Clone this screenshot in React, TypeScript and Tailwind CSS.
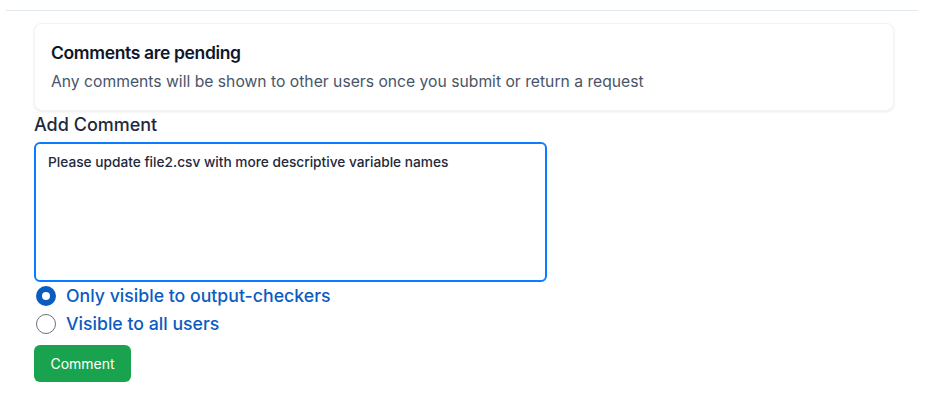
import React, { useState } from 'react';

const App = () => {
  const [visibility, setVisibility] = useState('checkers');
  const [comment, setComment] = useState('Please update file2.csv with more descriptive variable names');

  return (
    <main className="min-h-screen bg-white pl-[6px] pr-[10px] pt-[10px] font-['Inter',sans-serif] text-slate-900">
      <hr className="border-t border-[#e2e8f0]" />
      <div className="ml-[28px] mr-[24px] mt-3">
        <div className="rounded-lg border border-[#f1f3f5] bg-white px-4 pt-[16px] pb-[16px] shadow-[0_1px_3px_rgba(0,0,0,0.08)]">
          <h3 className="text-[17.5px] leading-[26px] font-semibold tracking-[-0.02em] text-[#0f172a]">Comments are pending</h3>
          <p className="mt-[4px] text-[15.7px] leading-[24px] text-[#475569]">
            Any comments will be shown to other users once you submit or return a request
          </p>
        </div>

        <label className="mt-0 block text-[18px] leading-[28px] font-medium text-[#1e293b]">Add Comment</label>
        <textarea
          className="mt-[3px] block h-[140px] w-[513px] resize-none rounded-md border-2 border-[#0a7cff] px-3 py-[8px] text-[13.7px] leading-[20px] font-medium text-[#1e293b] outline-none"
          value={comment}
          onChange={(e) => setComment(e.target.value)}
        />

        <div className="mt-0 flex flex-col">
          <label className="flex h-[28px] items-center gap-[10px] pl-[2px]">
            <input
              type="radio"
              name="visibility"
              className="sr-only"
              checked={visibility === 'checkers'}
              onChange={() => setVisibility('checkers')}
            />
            <span className="h-[20px] w-[20px] rounded-full border-[6px] border-[#0b5cc0] bg-white" />
            <span className="text-[17.7px] font-medium text-[#0b5cc0]">Only visible to output-checkers</span>
          </label>
          <label className="flex h-[28px] items-center gap-[10px] pl-[2px]">
            <input
              type="radio"
              name="visibility"
              className="sr-only"
              checked={visibility === 'all'}
              onChange={() => setVisibility('all')}
            />
            <span className="h-[20px] w-[20px] rounded-full border border-[#6b7280] bg-white" />
            <span className="text-[17.7px] font-medium text-[#0b5cc0]">Visible to all users</span>
          </label>
        </div>

        <button className="mt-[7px] h-[37px] w-[97px] rounded-md bg-[#1aa34e] text-[14px] font-normal text-white">
          Comment
        </button>
      </div>
    </main>
  );
};

export default App;
